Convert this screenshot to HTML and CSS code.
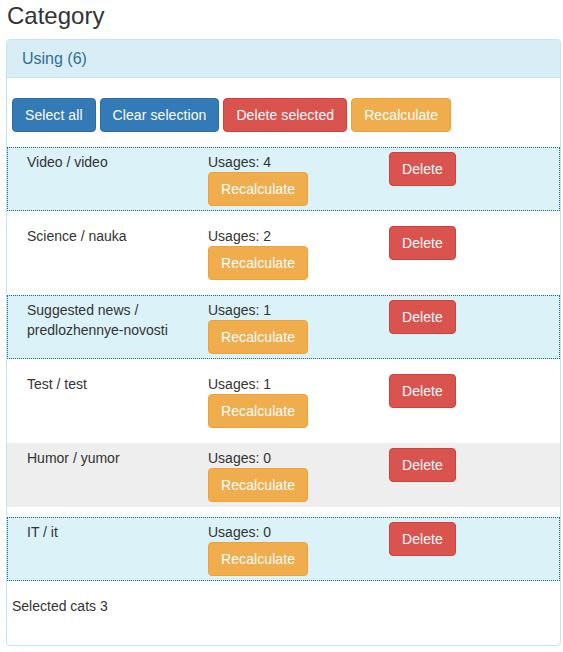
FILE: index.html
```html
<!DOCTYPE html>
<html>
<head>
<meta charset="utf-8">
<title>Category</title>
<link rel="stylesheet" href="styles.css">
</head>
<body>
<div class="page">
  <h3 class="title">Category</h3>
  <div class="panel">
    <div class="panel-heading">Using (6)</div>
    <div class="panel-body">
      <div class="toolbar">
        <button class="btn btn-primary">Select all</button>
        <button class="btn btn-primary">Clear selection</button>
        <button class="btn btn-danger">Delete selected</button>
        <button class="btn btn-warning">Recalculate</button>
      </div>
      <div class="cat-row selected">
        <div class="col">Video / video</div>
        <div class="col"><div>Usages: 4</div><button class="btn btn-warning">Recalculate</button></div>
        <div class="col"><button class="btn btn-danger">Delete</button></div>
      </div>
      <div class="cat-row">
        <div class="col">Science / nauka</div>
        <div class="col"><div>Usages: 2</div><button class="btn btn-warning">Recalculate</button></div>
        <div class="col"><button class="btn btn-danger">Delete</button></div>
      </div>
      <div class="cat-row selected">
        <div class="col">Suggested news / predlozhennye-novosti</div>
        <div class="col"><div>Usages: 1</div><button class="btn btn-warning">Recalculate</button></div>
        <div class="col"><button class="btn btn-danger">Delete</button></div>
      </div>
      <div class="cat-row">
        <div class="col">Test / test</div>
        <div class="col"><div>Usages: 1</div><button class="btn btn-warning">Recalculate</button></div>
        <div class="col"><button class="btn btn-danger">Delete</button></div>
      </div>
      <div class="cat-row hover">
        <div class="col">Humor / yumor</div>
        <div class="col"><div>Usages: 0</div><button class="btn btn-warning">Recalculate</button></div>
        <div class="col"><button class="btn btn-danger">Delete</button></div>
      </div>
      <div class="cat-row selected">
        <div class="col">IT / it</div>
        <div class="col"><div>Usages: 0</div><button class="btn btn-warning">Recalculate</button></div>
        <div class="col"><button class="btn btn-danger">Delete</button></div>
      </div>
      <p class="summary">Selected cats 3</p>
    </div>
  </div>
</div>
</body>
</html>
```

FILE: styles.css
```css
html, body {
  margin: 0;
  padding: 0;
  background: #fff;
}
body {
  font-family: "Liberation Sans", Arial, sans-serif;
  font-size: 14px;
  line-height: 20px;
  color: #333;
}
.page {
  padding: 0 2px 0 6px;
}
.title {
  margin: 3px 0 0 1px;
  font-size: 24px;
  line-height: 26px;
  font-weight: 500;
  color: #333;
}
.panel {
  margin-top: 10px;
  border: 1px solid #bce8f1;
  border-radius: 4px;
  background: #fff;
}
.panel-heading {
  background: #d9edf7;
  color: #31708f;
  font-size: 16px;
  line-height: 17px;
  padding: 10px 15px;
  border-bottom: 1px solid #bce8f1;
  border-radius: 3px 3px 0 0;
}
.panel-body {
  padding: 20px 0 29px;
}
.toolbar {
  display: flex;
  gap: 4px;
  padding: 0 5px;
  margin-bottom: 15px;
}
.btn {
  display: inline-block;
  font-family: inherit;
  font-size: 14px;
  line-height: 20px;
  padding: 6px 12px;
  border: 1px solid transparent;
  border-radius: 4px;
  color: #fff;
  cursor: pointer;
  white-space: nowrap;
  letter-spacing: 0.08px;
}
.btn-primary {
  background: #337ab7;
  border-color: #2e6da4;
}
.btn-danger {
  background: #d9534f;
  border-color: #d43f3a;
}
.btn-warning {
  background: #f0ad4e;
  border-color: #eea236;
}
.cat-row {
  display: grid;
  grid-template-columns: 1fr 1fr 1fr;
  padding: 4px;
  border: 1px solid transparent;
  margin-bottom: 10px;
}
.cat-row.selected {
  background: #dcf2f9;
  border: 1px dotted #136b7f;
}
.cat-row.hover {
  background: #eeeeee;
}
.col {
  padding: 0 15px;
}
.summary {
  margin: 15px 5px 0;
}
```
